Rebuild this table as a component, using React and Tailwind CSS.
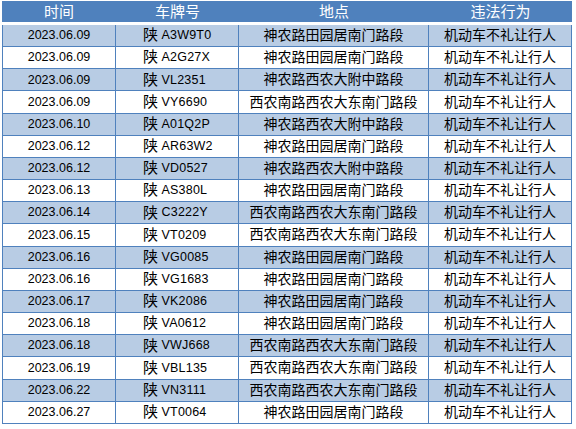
import React from "react";

const rows = [
  ["2023.06.09", "A3W9T0", "神农路田园居南门路段"],
  ["2023.06.09", "A2G27X", "神农路田园居南门路段"],
  ["2023.06.09", "VL2351", "神农路西农大附中路段"],
  ["2023.06.09", "VY6690", "西农南路西农大东南门路段"],
  ["2023.06.10", "A01Q2P", "神农路西农大附中路段"],
  ["2023.06.12", "AR63W2", "神农路田园居南门路段"],
  ["2023.06.12", "VD0527", "神农路西农大附中路段"],
  ["2023.06.13", "AS380L", "神农路田园居南门路段"],
  ["2023.06.14", "C3222Y", "西农南路西农大东南门路段"],
  ["2023.06.15", "VT0209", "西农南路西农大东南门路段"],
  ["2023.06.16", "VG0085", "神农路田园居南门路段"],
  ["2023.06.16", "VG1683", "神农路田园居南门路段"],
  ["2023.06.17", "VK2086", "神农路田园居南门路段"],
  ["2023.06.18", "VA0612", "神农路田园居南门路段"],
  ["2023.06.18", "VWJ668", "西农南路西农大东南门路段"],
  ["2023.06.19", "VBL135", "西农南路西农大东南门路段"],
  ["2023.06.22", "VN3111", "西农南路西农大东南门路段"],
  ["2023.06.27", "VT0064", "神农路田园居南门路段"],
];

const font = {
  fontFamily: '"Liberation Sans", "Noto Sans CJK SC", sans-serif',
};

export default function App() {
  return (
    <div
      className="relative w-[576px] h-[429px] bg-white pl-[2px] pt-[1px] overflow-hidden text-black"
      style={font}
    >
      <div className="w-[570px]">
        <div className="flex h-[21px] bg-[#4f81bd] text-white text-[15px] leading-[21px]">
          <div className="w-[114px] text-center">时间</div>
          <div className="w-[123px] text-center">车牌号</div>
          <div className="w-[190px] text-center">地点</div>
          <div className="w-[143px] text-center">违法行为</div>
        </div>
        <div className="mt-[3px] w-[570px] flex flex-col">
          {rows.map((r, i) => (
            <div
              key={i}
              className={`flex h-[22.17px] border-b border-[#4f81bd] ${
                i % 2 === 0 ? "bg-[#b8cce4]" : "bg-white"
              }`}
            >
              <div className="w-[114px] border-l border-r border-[#4f81bd] flex items-center justify-center text-[12.5px]">
                {r[0]}
              </div>
              <div className="w-[123px] border-r border-[#4f81bd] flex items-center pl-[27px]">
                <span className="text-[15px]">陕</span>
                <span className="text-[12.5px] ml-[3.5px] tracking-[0.2px]">{r[1]}</span>
              </div>
              <div className="w-[190px] border-r border-[#4f81bd] flex items-center justify-center text-[14px]">
                {r[2]}
              </div>
              <div className="w-[143px] border-r border-[#4f81bd] flex items-center justify-center text-[14px]">
                机动车不礼让行人
              </div>
            </div>
          ))}
        </div>
      </div>
    </div>
  );
}
